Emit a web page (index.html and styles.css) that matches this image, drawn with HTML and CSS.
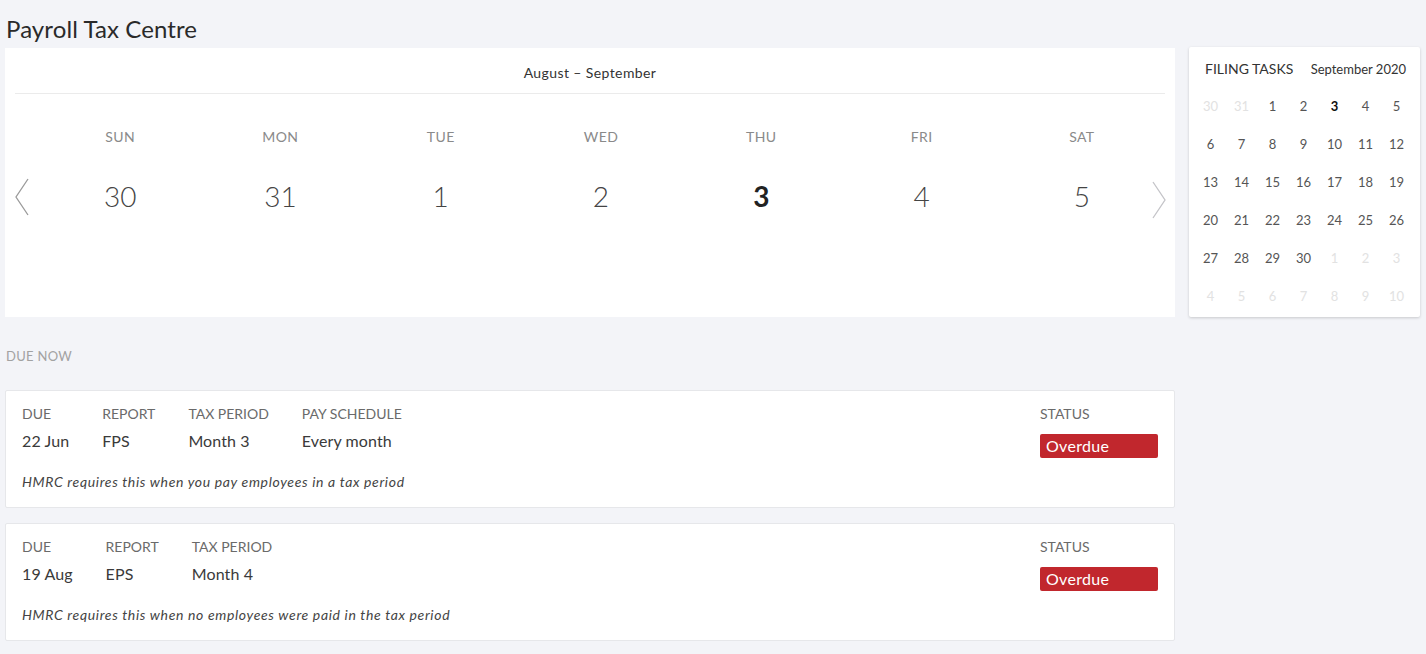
FILE: index.html
```html
<!DOCTYPE html>
<html lang="en">
<head>
<meta charset="utf-8">
<title>Payroll Tax Centre</title>
<link rel="stylesheet" href="styles.css">
</head>
<body>
<div class="page">
  <h1 class="title">Payroll Tax Centre</h1>
  <div class="layout">
    <main class="main">
      <section class="week-card">
        <div class="week-head">August – September</div>
        <div class="week-body">
          <button class="nav nav-prev" aria-label="Previous">
            <svg width="14" height="38" viewBox="0 0 14 38"><polyline points="13,1 1,19 13,37" fill="none" stroke="#9a9a9a" stroke-width="1.3"/></svg>
          </button>
          <div class="week-grid">
            <div class="day"><div class="dname">SUN</div><div class="dnum">30</div></div>
            <div class="day"><div class="dname">MON</div><div class="dnum">31</div></div>
            <div class="day"><div class="dname">TUE</div><div class="dnum">1</div></div>
            <div class="day"><div class="dname">WED</div><div class="dnum">2</div></div>
            <div class="day"><div class="dname">THU</div><div class="dnum today">3</div></div>
            <div class="day"><div class="dname">FRI</div><div class="dnum">4</div></div>
            <div class="day"><div class="dname">SAT</div><div class="dnum">5</div></div>
          </div>
          <button class="nav nav-next" aria-label="Next">
            <svg width="14" height="38" viewBox="0 0 14 38"><polyline points="1,1 13,19 1,37" fill="none" stroke="#c4c4c8" stroke-width="1.3"/></svg>
          </button>
        </div>
      </section>

      <div class="section-label">DUE NOW</div>

      <article class="task">
        <div class="task-row">
          <div class="field"><div class="flabel">DUE</div><div class="fvalue">22 Jun</div></div>
          <div class="field"><div class="flabel">REPORT</div><div class="fvalue">FPS</div></div>
          <div class="field"><div class="flabel">TAX PERIOD</div><div class="fvalue">Month 3</div></div>
          <div class="field"><div class="flabel">PAY SCHEDULE</div><div class="fvalue">Every month</div></div>
          <div class="field status"><div class="flabel">STATUS</div><div class="badge">Overdue</div></div>
        </div>
        <p class="note">HMRC requires this when you pay employees in a tax period</p>
      </article>

      <article class="task">
        <div class="task-row">
          <div class="field"><div class="flabel">DUE</div><div class="fvalue">19 Aug</div></div>
          <div class="field"><div class="flabel">REPORT</div><div class="fvalue">EPS</div></div>
          <div class="field"><div class="flabel">TAX PERIOD</div><div class="fvalue">Month 4</div></div>
          <div class="field status"><div class="flabel">STATUS</div><div class="badge">Overdue</div></div>
        </div>
        <p class="note">HMRC requires this when no employees were paid in the tax period</p>
      </article>
    </main>

    <aside class="side">
      <div class="side-head">
        <span class="side-title">FILING TASKS</span>
        <span class="side-month">September 2020</span>
      </div>
      <div class="mini-grid">
        <span class="m out">30</span><span class="m out">31</span><span class="m">1</span><span class="m">2</span><span class="m cur">3</span><span class="m">4</span><span class="m">5</span>
        <span class="m">6</span><span class="m">7</span><span class="m">8</span><span class="m">9</span><span class="m">10</span><span class="m">11</span><span class="m">12</span>
        <span class="m">13</span><span class="m">14</span><span class="m">15</span><span class="m">16</span><span class="m">17</span><span class="m">18</span><span class="m">19</span>
        <span class="m">20</span><span class="m">21</span><span class="m">22</span><span class="m">23</span><span class="m">24</span><span class="m">25</span><span class="m">26</span>
        <span class="m">27</span><span class="m">28</span><span class="m">29</span><span class="m">30</span><span class="m out">1</span><span class="m out">2</span><span class="m out">3</span>
        <span class="m out">4</span><span class="m out">5</span><span class="m out">6</span><span class="m out">7</span><span class="m out">8</span><span class="m out">9</span><span class="m out">10</span>
      </div>
    </aside>
  </div>
</div>
</body>
</html>
```

FILE: styles.css
```css
* { box-sizing: border-box; }

html, body {
  margin: 0;
  padding: 0;
  background: #f3f4f8;
  font-family: Lato, "Noto Sans", "Liberation Sans", sans-serif;
  color: #333;
}

.page {
  padding: 0 6px 0 5px;
}

.title {
  margin: 0 0 4px 0;
  padding: 14px 0 0 1px;
  font-size: 24px;
  line-height: 30px;
  font-weight: 400;
  color: #2a2a2a;
  letter-spacing: 0.1px;
}

.layout {
  display: flex;
  align-items: flex-start;
  gap: 14px;
}

.main {
  width: 1170px;
  flex: none;
}

/* Week calendar */
.week-card {
  background: #fff;
  height: 269px;
  padding: 0 10px;
}

.week-head {
  padding: 16px 0 11px;
  line-height: 18px;
  font-size: 14px;
  letter-spacing: 0.4px;
  text-align: center;
  color: #333;
  border-bottom: 1px solid #ebebeb;
}

.week-body {
  position: relative;
  padding: 33px 3px 0 25px;
}

.week-grid {
  display: grid;
  grid-template-columns: repeat(7, 1fr);
}

.day {
  text-align: center;
}

.dname {
  font-size: 14px;
  line-height: 20px;
  color: #8a8a8a;
  letter-spacing: 0.4px;
}

.dnum {
  margin-top: 31px;
  font-size: 28px;
  line-height: 36px;
  font-weight: 300;
  color: #444;
}

.dnum.today {
  font-weight: 700;
  color: #222;
}

.nav {
  position: absolute;
  top: 84px;
  padding: 0;
  border: 0;
  background: none;
  width: 14px;
  height: 38px;
  cursor: pointer;
}

.nav svg { display: block; }

.nav-prev { left: 0; }
.nav-next { right: -1px; top: 87px; }

/* Due now */
.section-label {
  margin: 30px 0 25px 1px;
  font-size: 13px;
  line-height: 18px;
  color: #a2a2a2;
  letter-spacing: 0.3px;
}

.task {
  background: #fff;
  border: 1px solid #e6e7ea;
  border-radius: 2px;
  padding: 14px 16px 16px 16px;
  margin-bottom: 15px;
}

.task-row {
  display: flex;
  gap: 33px;
}

.field.status {
  margin-left: auto;
  width: 118px;
}

.flabel {
  font-size: 14px;
  line-height: 18px;
  color: #6a6a6a;
}

.fvalue {
  margin-top: 7px;
  font-size: 16px;
  line-height: 22px;
  color: #3a3a3a;
  letter-spacing: 0.1px;
}

.badge {
  margin-top: 11px;
  margin-bottom: -6px;
  height: 24px;
  line-height: 24px;
  padding-left: 6px;
  background: #c1272d;
  color: #fff;
  font-size: 16px;
  letter-spacing: 0.3px;
  border-radius: 2px;
}

.note {
  margin: 21px 0 0 0;
  font-size: 14px;
  line-height: 18px;
  font-style: italic;
  letter-spacing: 0.65px;
  color: #444;
}

/* Sidebar mini calendar */
.side {
  margin-top: -1px;
  width: 231px;
  height: 270px;
  flex: none;
  background: #fff;
  box-shadow: 0 1px 3px rgba(0, 0, 0, 0.18);
  border-radius: 2px;
}

.side-head {
  display: flex;
  justify-content: space-between;
  align-items: baseline;
  padding: 13px 14px 0 16px;
  line-height: 18px;
}

.side-title {
  font-size: 14px;
  color: #333;
}

.side-month {
  font-size: 13px;
  color: #333;
}

.mini-grid {
  display: grid;
  grid-template-columns: repeat(7, 31px);
  grid-auto-rows: 38px;
  margin: 9px 0 0 6px;
}

.m {
  display: flex;
  align-items: center;
  justify-content: center;
  font-size: 13px;
  color: #555;
}

.m.out { color: #e2e2e2; }

.m.cur {
  font-weight: 700;
  color: #111;
}
```
